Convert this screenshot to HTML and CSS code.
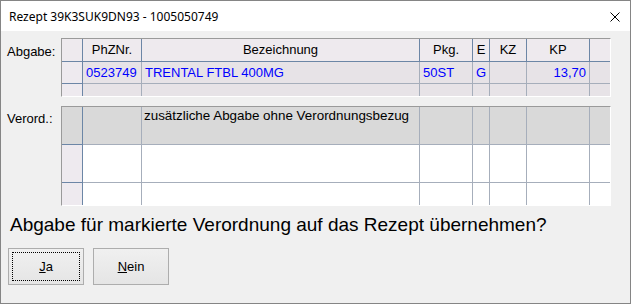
FILE: index.html
```html
<!DOCTYPE html>
<html lang="de">
<head>
    <meta charset="UTF-8">
    <title>Rezept 39K3SUK9DN93 - 1005050749</title>
    <link rel="stylesheet" href="styles.css">
</head>
<body>
    <div class="window">
        <!-- Title bar -->
        <div class="titlebar">
            <span class="title">Rezept 39K3SUK9DN93 - 1005050749</span>
            <svg class="close" width="10" height="10" viewBox="0 0 10 10">
                <path d="M0.5 0.5 L9.5 9.5 M9.5 0.5 L0.5 9.5" stroke="#000" stroke-width="1" fill="none"/>
            </svg>
        </div>

        <div class="content">
            <!-- Abgabe grid -->
            <div class="grid-row">
                <div class="label label-abgabe">Abgabe:</div>
                <div class="grid grid-abgabe">
                    <div class="cell ind hd"></div>
                    <div class="cell hd center">PhZNr.</div>
                    <div class="cell hd center">Bezeichnung</div>
                    <div class="cell hd center">Pkg.</div>
                    <div class="cell hd center">E</div>
                    <div class="cell hd center">KZ</div>
                    <div class="cell hd center">KP</div>
                    <div class="cell hd last"></div>

                    <div class="cell ind"></div>
                    <div class="cell data blue">0523749</div>
                    <div class="cell data blue">TRENTAL FTBL 400MG</div>
                    <div class="cell data blue">50ST</div>
                    <div class="cell data blue">G</div>
                    <div class="cell data"></div>
                    <div class="cell data blue right">13,70</div>
                    <div class="cell data last"></div>

                    <div class="cell ind"></div>
                    <div class="cell data"></div>
                    <div class="cell data"></div>
                    <div class="cell data"></div>
                    <div class="cell data"></div>
                    <div class="cell data"></div>
                    <div class="cell data"></div>
                    <div class="cell data last"></div>
                </div>
            </div>

            <!-- Verordnung grid -->
            <div class="grid-row">
                <div class="label label-verord">Verord.:</div>
                <div class="grid grid-verord">
                    <div class="cell ind sel"></div>
                    <div class="cell sel"></div>
                    <div class="cell sel top">zusätzliche Abgabe ohne Verordnungsbezug</div>
                    <div class="cell sel"></div>
                    <div class="cell sel"></div>
                    <div class="cell sel"></div>
                    <div class="cell sel"></div>
                    <div class="cell sel last"></div>

                    <div class="cell ind"></div>
                    <div class="cell white"></div>
                    <div class="cell white"></div>
                    <div class="cell white"></div>
                    <div class="cell white"></div>
                    <div class="cell white"></div>
                    <div class="cell white"></div>
                    <div class="cell white last"></div>

                    <div class="cell ind"></div>
                    <div class="cell white"></div>
                    <div class="cell white"></div>
                    <div class="cell white"></div>
                    <div class="cell white"></div>
                    <div class="cell white"></div>
                    <div class="cell white"></div>
                    <div class="cell white last"></div>
                </div>
            </div>

            <div class="question">Abgabe für markierte Verordnung auf das Rezept übernehmen?</div>

            <div class="buttons">
                <button class="btn focused"><span><u>J</u>a</span></button>
                <button class="btn"><span><u>N</u>ein</span></button>
            </div>
        </div>
    </div>
</body>
</html>
```

FILE: styles.css
```css
html, body {
    margin: 0;
    padding: 0;
}
body {
    width: 631px;
    height: 304px;
    overflow: hidden;
    font-family: "Liberation Sans", Arial, sans-serif;
}
.window {
    box-sizing: border-box;
    width: 631px;
    height: 304px;
    border: 1px solid #858585;
    background-color: #f0f0f0;
}
.titlebar {
    height: 30px;
    background-color: #fff;
    display: flex;
    align-items: center;
    justify-content: space-between;
    padding: 0 10px 0 8px;
}
.title {
    font-family: "Noto Sans", "Open Sans", sans-serif;
    font-size: 12px;
    color: #000;
}
.close {
    display: block;
    margin-top: 1px;
}
.content {
    padding: 7px 0 0 6px;
}
.grid-row {
    display: flex;
    align-items: flex-start;
    margin-bottom: 9px;
}
.label {
    width: 54px;
    font-size: 13px;
    line-height: 15px;
    color: #000;
}
.label-abgabe {
    padding-top: 6px;
}
.label-verord {
    padding-top: 5px;
}
.grid {
    display: grid;
    grid-template-columns: 21px 59px 278px 53px 17px 37px 63px 20px;
    border-style: solid;
    border-width: 1px;
    border-color: #9a9a9a #fff #fff #9a9a9a;
    box-shadow: inset 1px 0 0 #6a6a6a;
    overflow: hidden;
    font-size: 13px;
}
.grid-abgabe {
    grid-template-rows: 23px 22px 22px;
    height: 57px;
    background-color: #e7e3e7;
}
.grid-verord {
    grid-template-rows: 38px 38px 30px;
    height: 98px;
}
.cell {
    box-sizing: border-box;
    border-right: 1px solid #a6aebb;
    border-bottom: 1px solid #a6aebb;
    padding: 0 3px;
    white-space: nowrap;
    overflow: hidden;
    line-height: 21px;
}
.cell.last {
    border-right: none;
}
.cell.ind {
    border-right-color: #6c86a6;
    border-bottom-color: #6c86a6;
    background-color: #eeeaef;
}
.cell.hd {
    background-color: #eeeaee;
    border-right-color: #6c86a6;
    border-bottom-color: #6c86a6;
    line-height: 22px;
}
.cell.data {
    background-color: #e7e3e7;
}
.center {
    text-align: center;
}
.right {
    text-align: right;
}
.blue {
    color: #0000ff;
}
.cell.sel {
    background-color: #d9d9d9;
}
.cell.white {
    background-color: #fff;
}
.cell.top {
    font-size: 13.4px;
    line-height: 15px;
    padding-top: 1px;
    padding-left: 2px;
}
.question {
    font-size: 19px;
    line-height: 22px;
    color: #000;
    padding-left: 3px;
    margin-top: -1px;
}
.buttons {
    display: flex;
    gap: 9px;
    margin-top: 12px;
    padding-left: 1px;
}
.btn {
    position: relative;
    box-sizing: border-box;
    width: 76px;
    height: 37px;
    border: 1px solid #adadad;
    background: linear-gradient(#f0f0f0, #e5e5e5);
    font-family: "Liberation Sans", Arial, sans-serif;
    font-size: 13px;
    color: #000;
    padding: 0;
    margin: 0;
}
.btn.focused::after {
    content: "";
    position: absolute;
    top: 3px;
    left: 3px;
    right: 3px;
    bottom: 3px;
    border: 1px dotted #000;
}
```
